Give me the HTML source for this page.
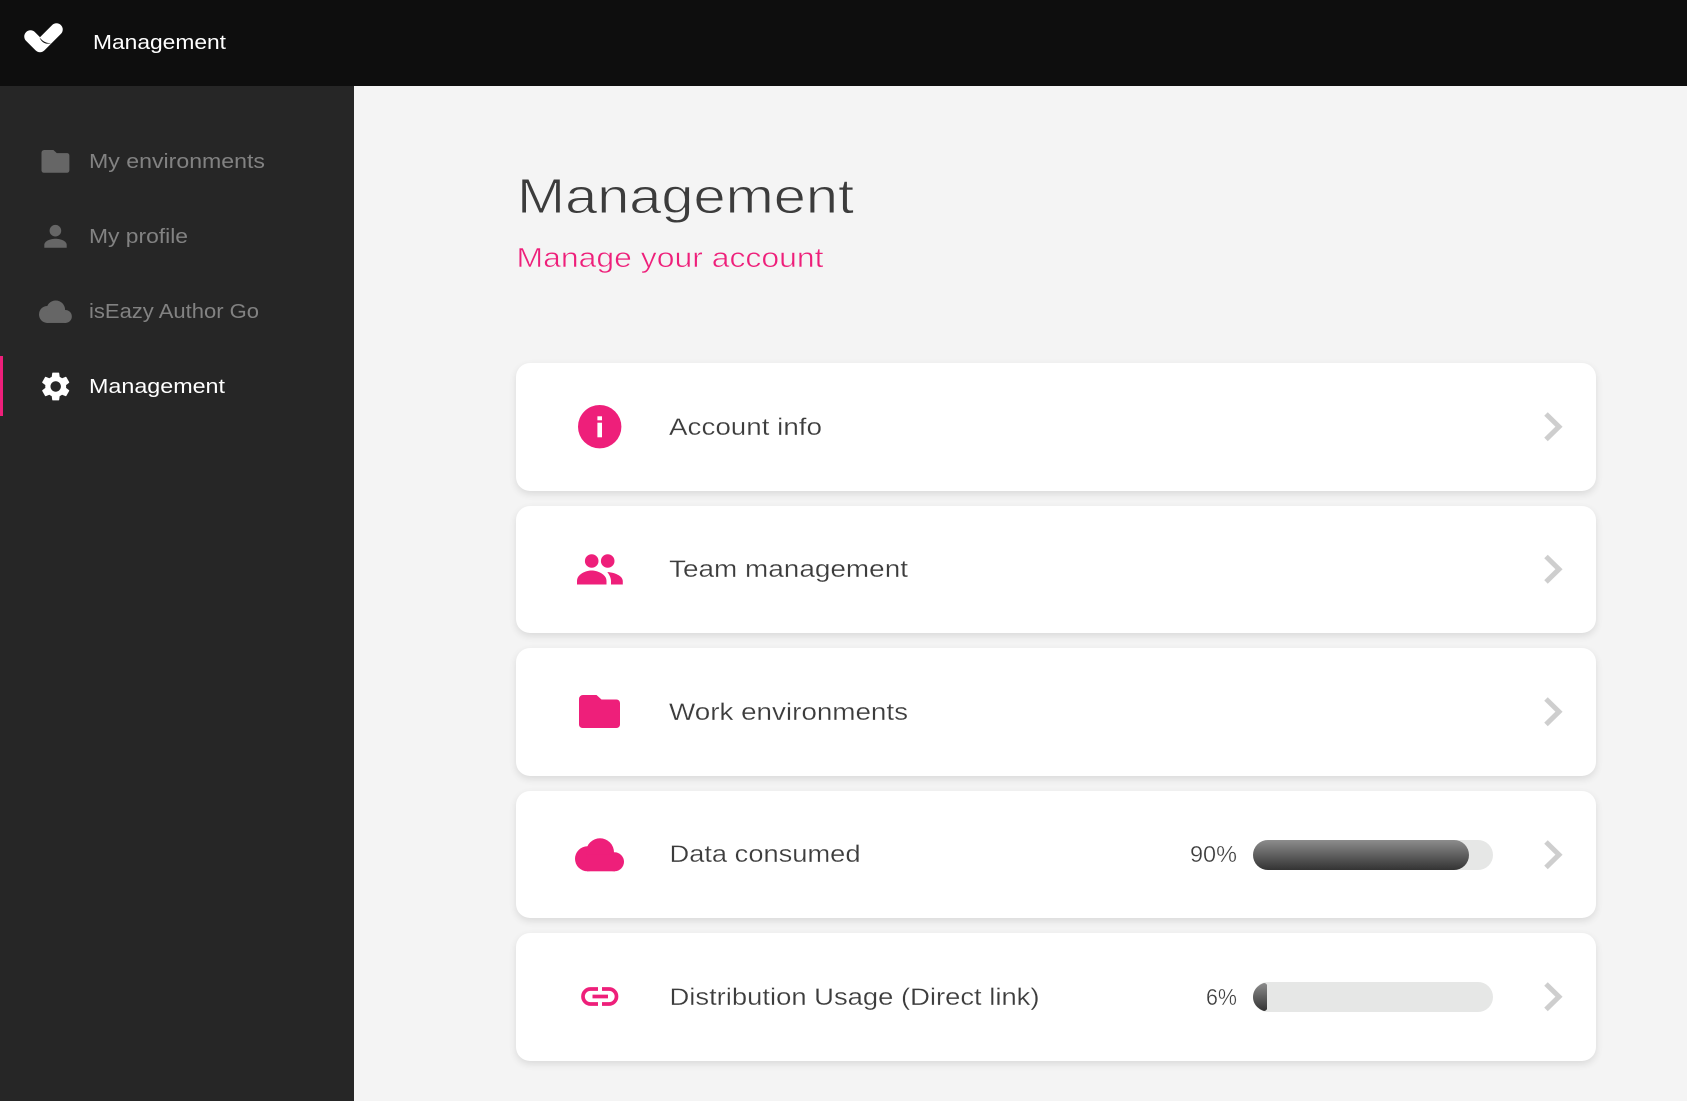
<!DOCTYPE html>
<html lang="en"><head><meta charset="utf-8"><title>Management</title>
<style>
html,body{margin:0;padding:0;width:1687px;height:1101px;overflow:hidden;background:#f4f4f4}
.top{position:absolute;left:0;top:0;width:1687px;height:86px;background:#0e0e0e}
.side{position:absolute;left:0;top:86px;width:354px;height:1015px;background:#262626}
.mark{position:absolute;left:0;top:356px;width:3px;height:60px;background:#ee1f7a}
.card{position:absolute;left:516px;width:1080px;background:#fff;border-radius:14px;box-shadow:0 3px 8px rgba(0,0,0,.11)}
svg{position:absolute;left:0;top:0}
text{font-family:"Liberation Sans",Arial,sans-serif}
.nav{font-size:20px;fill:#828282}
.row{font-size:24px;fill:#3c3c3c;stroke:#fff;stroke-width:.25px}
.pct{font-size:23px;fill:#3c3c3c;stroke:#fff;stroke-width:.35px}
.title{font-size:49px;fill:#3c3c3c;stroke:#f4f4f4;stroke-width:.9px}
.sub{font-size:28px;fill:#ee1f7a;stroke:#f4f4f4;stroke-width:.55px}
</style></head><body>
<div class="top"></div>
<div class="side"></div>
<div class="mark"></div>
<div class="card" style="top:363px;height:128px"></div>
<div class="card" style="top:506px;height:127px"></div>
<div class="card" style="top:648px;height:128px"></div>
<div class="card" style="top:791px;height:127px"></div>
<div class="card" style="top:933px;height:128px"></div>
<svg width="1687" height="1101" viewBox="0 0 1687 1101" xmlns="http://www.w3.org/2000/svg">
<defs>
<linearGradient id="g" x1="0" y1="0" x2="0" y2="1"><stop offset="0" stop-color="#8c8c8c"/><stop offset="1" stop-color="#333"/></linearGradient>
<g id="cloud"><circle cx="12.5" cy="20.5" r="12.5"/><circle cx="25" cy="14" r="14"/><circle cx="39.5" cy="23.5" r="9.5"/><rect x="12" y="16" width="28" height="17"/></g>
<path id="folder" d="M4 0H17.5L22.5 4.5H37.5A3.5 3.5 0 0 1 41 8V29.5A3.5 3.5 0 0 1 37.5 33H3.5A3.5 3.5 0 0 1 0 29.5V4A4 4 0 0 1 4 0Z"/>
<polyline id="chev" points="0,0 13,12.7 0,25.4" fill="none" stroke="#cecece" stroke-width="5"/>
</defs>

<!-- header -->
<polyline points="30.5,36.5 40,46 56.5,29.5" fill="none" stroke="#fff" stroke-width="12.5" stroke-linecap="round" stroke-linejoin="round"/>
<path d="M39.5 37.5C43 41.5 46 43.3 51 43C46 44.8 42 43 39.5 37.5Z" fill="#0e0e0e"/>
<text x="93" y="49" font-size="20" fill="#fff" textLength="133" lengthAdjust="spacingAndGlyphs">Management</text>

<!-- sidebar -->
<use href="#folder" transform="translate(41.5 150) scale(.68 .69)" fill="#666"/>
<g fill="#666"><circle cx="55.4" cy="230.7" r="5.8"/><path d="M44.3 247.7V245C44.3 240.8 51 238.8 55.5 238.8S66.7 240.8 66.7 245V247.7Z"/></g>
<use href="#cloud" transform="translate(39 300.5) scale(.67 .68)" fill="#666"/>
<path transform="translate(38.3 369.1) scale(1.45)" fill="#fff" d="M19.14 12.94c.04-.3.06-.61.06-.94 0-.32-.02-.64-.07-.94l2.03-1.58c.18-.14.23-.41.12-.61l-1.92-3.32c-.12-.22-.37-.29-.59-.22l-2.39.96c-.5-.38-1.03-.7-1.62-.94l-.36-2.54c-.04-.24-.24-.41-.48-.41h-3.84c-.24 0-.43.17-.47.41l-.36 2.54c-.59.24-1.13.57-1.62.94l-2.39-.96c-.22-.08-.47 0-.59.22L2.74 8.87c-.12.21-.08.47.12.61l2.03 1.58c-.05.3-.09.63-.09.94s.02.64.07.94l-2.03 1.58c-.18.14-.23.41-.12.61l1.92 3.32c.12.22.37.29.59.22l2.39-.96c.5.38 1.03.7 1.62.94l.36 2.54c.05.24.24.41.48.41h3.84c.24 0 .44-.17.47-.41l.36-2.54c.59-.24 1.13-.56 1.62-.94l2.39.96c.22.08.47 0 .59-.22l1.92-3.32c.12-.22.07-.47-.12-.61l-2.01-1.58zM12 15.6c-1.98 0-3.6-1.62-3.6-3.6s1.62-3.6 3.6-3.6 3.6 1.62 3.6 3.6-1.62 3.6-3.6 3.6z"/>
<text class="nav" x="89" y="168" textLength="176" lengthAdjust="spacingAndGlyphs">My environments</text>
<text class="nav" x="89" y="243" textLength="99" lengthAdjust="spacingAndGlyphs">My profile</text>
<text class="nav" x="89" y="318" textLength="170" lengthAdjust="spacingAndGlyphs">isEazy Author Go</text>
<text class="nav" x="89" y="393" style="fill:#fff" textLength="136" lengthAdjust="spacingAndGlyphs">Management</text>

<!-- heading -->
<text class="title" x="517" y="213" textLength="337" lengthAdjust="spacingAndGlyphs">Management</text>
<text class="sub" x="516.5" y="267" textLength="307" lengthAdjust="spacingAndGlyphs">Manage your account</text>

<!-- row icons -->
<circle cx="599.7" cy="426.7" r="21.7" fill="#ee1f7a"/>
<rect x="597.4" y="416.3" width="4.6" height="4" fill="#fff"/><rect x="597.4" y="422.7" width="4.6" height="14.6" fill="#fff"/>
<g fill="#ee1f7a">
<circle cx="591.7" cy="561" r="6.8"/><circle cx="607.7" cy="561" r="6.8"/>
<path d="M577 584.5V581C577 574 586 570.5 591.7 570.5C597 570.5 606.5 574 606.5 581V584.5Z"/>
<path d="M607.3 572C615 572.5 622.8 576 622.8 581V584.5H611V581C611 578 609.5 575 607.3 572Z"/>
</g>
<use href="#folder" transform="translate(579 695)" fill="#ee1f7a"/>
<use href="#cloud" transform="translate(575 838.3)" fill="#ee1f7a"/>
<g fill="none" stroke="#ee1f7a" stroke-width="3.7">
<path d="M598 989H590.5A7.5 7.5 0 0 0 590.5 1004H598"/>
<path d="M602 989H609A7.5 7.5 0 0 1 609 1004H602"/>
<path d="M592.5 996.5H608"/>
</g>

<!-- row labels -->
<text class="row" x="669" y="435" textLength="153" lengthAdjust="spacingAndGlyphs">Account info</text>
<text class="row" x="669" y="577" textLength="239" lengthAdjust="spacingAndGlyphs">Team management</text>
<text class="row" x="669" y="720" textLength="239" lengthAdjust="spacingAndGlyphs">Work environments</text>
<text class="row" x="669.5" y="862" textLength="191" lengthAdjust="spacingAndGlyphs">Data consumed</text>
<text class="row" x="669.5" y="1005" textLength="370" lengthAdjust="spacingAndGlyphs">Distribution Usage (Direct link)</text>

<!-- progress -->
<text class="pct" x="1190" y="862" textLength="47" lengthAdjust="spacingAndGlyphs">90%</text>
<rect x="1253" y="840" width="240" height="30" rx="15" fill="#e6e7e6"/>
<rect x="1253" y="840" width="216" height="30" rx="15" fill="url(#g)"/>
<text class="pct" x="1206" y="1005" textLength="31" lengthAdjust="spacingAndGlyphs">6%</text>
<rect x="1253" y="982" width="240" height="30" rx="15" fill="#e6e7e6"/>
<path d="M1267 985Q1266 983 1264 983C1258 985 1253 990 1253 997C1253 1004 1258 1009 1264 1011Q1266 1011 1267 1009Z" fill="url(#g)"/>

<!-- chevrons -->
<use href="#chev" transform="translate(1546 414)"/>
<use href="#chev" transform="translate(1546 556.5)"/>
<use href="#chev" transform="translate(1546 699)"/>
<use href="#chev" transform="translate(1546 842)"/>
<use href="#chev" transform="translate(1546 984)"/>
</svg>
</body></html>
